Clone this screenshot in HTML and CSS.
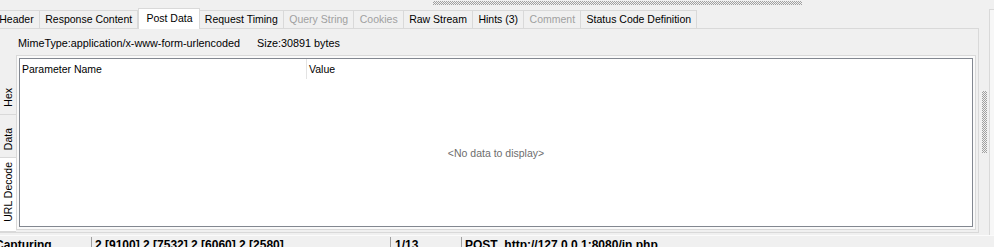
FILE: index.html
```html
<!DOCTYPE html>
<html>
<head>
<meta charset="utf-8">
<link rel="stylesheet" href="styles.css">
</head>
<body>
<div class="app">
  <div class="hsplit"><div class="grip-h"></div></div>
  <div class="main">
    <div class="tabctl">
      <div class="tabstrip">
        <div class="tab">Header</div>
        <div class="tab">Response Content</div>
        <div class="tab active">Post Data</div>
        <div class="tab">Request Timing</div>
        <div class="tab disabled">Query String</div>
        <div class="tab disabled">Cookies</div>
        <div class="tab">Raw Stream</div>
        <div class="tab">Hints (3)</div>
        <div class="tab disabled">Comment</div>
        <div class="tab">Status Code Definition</div>
      </div>
      <div class="page">
        <div class="mimebar">
          <span>MimeType:application/x-www-form-urlencoded</span>
          <span class="size">Size:30891 bytes</span>
        </div>
        <div class="subctl">
          <div class="vtabs">
            <div class="vtab vtab-hex"><span class="vtext">Hex</span></div>
            <div class="vtab vtab-data"><span class="vtext">Data</span></div>
            <div class="vtab vtab-url active"><span class="vtext">URL Decode</span></div>
          </div>
          <div class="frame">
            <div class="grid">
              <div class="ghead">
                <div class="gcol gcol-name">Parameter Name</div>
                <div class="gcol gcol-value">Value</div>
              </div>
              <div class="gbody">&lt;No data to display&gt;</div>
            </div>
          </div>
        </div>
      </div>
    </div>
    <div class="vsplit"><div class="grip-v"></div></div>
    <div class="rightpane"></div>
  </div>
  <div class="statusbar">
    <div class="pane pane-state">Capturing</div>
    <div class="pane pane-procs">2 [9100] 2 [7532] 2 [6060] 2 [2580]</div>
    <div class="pane pane-count">1/13</div>
    <div class="pane pane-url">POST  http://127.0.0.1:8080/in.php</div>
  </div>
</div>
</body>
</html>
```
FILE: styles.css
```css
* { box-sizing: border-box; }

html, body {
  margin: 0;
  padding: 0;
}

body {
  width: 994px;
  height: 247px;
  overflow: hidden;
  background: #f0f0f0;
  color: #000;
  font-family: "Liberation Sans", Arial, sans-serif;
  font-size: 10.5px;
}

.app {
  width: 994px;
  height: 247px;
  overflow: hidden;
}

.hsplit {
  height: 8px;
  padding-top: 1px;
}

.grip-h {
  margin-left: 433px;
  width: 369px;
  height: 4px;
  background: conic-gradient(#a0a0a0 25%, transparent 0 50%, #a0a0a0 0 75%, transparent 0) 0 0 / 2px 2px;
}

.main {
  display: flex;
  height: 227px;
}

.tabctl {
  width: 979px;
  flex: none;
  display: flex;
  flex-direction: column;
}

.tabstrip {
  height: 20px;
  display: flex;
  align-items: flex-end;
  margin-left: -6px;
  position: relative;
  z-index: 1;
}

.tab {
  height: 18px;
  line-height: 17px;
  padding: 0 5.25px;
  border-top: 1px solid #d9d9d9;
  border-right: 1px solid #d9d9d9;
  white-space: nowrap;
}

.tab.disabled {
  color: #a0a0a0;
}

.tab.active {
  height: 21px;
  line-height: 19px;
  margin-bottom: -1px;
  padding: 0 6px 0 7px;
  background: #fff;
  border-left: 1px solid #d9d9d9;
}

.page {
  height: 205px;
  border: 1px solid #d9d9d9;
  border-left: 0;
  background: #f0f0f0;
}

.mimebar {
  height: 26px;
  padding: 2px 0 0 18px;
  display: flex;
  align-items: center;
  white-space: nowrap;
  font-size: 10.8px;
}

.mimebar .size {
  margin-left: 17px;
}

.subctl {
  display: flex;
  height: 177px;
}

.vtabs {
  width: 16px;
  flex: none;
  display: flex;
  flex-direction: column;
  justify-content: flex-end;
}

.vtab {
  display: flex;
  flex-direction: column;
  justify-content: flex-end;
  align-items: center;
  padding-right: 1px;
  border-top: 1px solid #d9d9d9;
}

.vtab-hex {
  height: 28px;
  padding-bottom: 7px;
  border-top: 0;
}

.vtab-data {
  height: 43px;
  padding-bottom: 7px;
}

.vtab-url {
  height: 75px;
  padding-bottom: 9px;
}

.vtab.active {
  background: #fff;
  border-bottom: 1px solid #d9d9d9;
}

.vtext {
  writing-mode: vertical-rl;
  transform: rotate(180deg);
  line-height: 12px;
  white-space: nowrap;
}

.frame {
  width: 960px;
  height: 175px;
  border: 1px solid #d9d9d9;
  padding: 2px;
  background: #fafafa;
}

.grid {
  height: 100%;
  border: 1px solid #828790;
  background: #fff;
  display: flex;
  flex-direction: column;
}

.ghead {
  display: flex;
  height: 20px;
}

.gcol {
  line-height: 20px;
  padding-left: 2px;
  white-space: nowrap;
}

.gcol-name {
  width: 287px;
  border-right: 1px solid #e3e3e3;
}

.gbody {
  flex: 1;
  display: flex;
  align-items: center;
  justify-content: center;
  color: #6d6d6d;
}

.vsplit {
  width: 10px;
  flex: none;
}

.grip-v {
  margin: 83px 0 0 3px;
  width: 5px;
  height: 62px;
  background: conic-gradient(#a0a0a0 25%, transparent 0 50%, #a0a0a0 0 75%, transparent 0) 0 0 / 2px 2px;
}

.rightpane {
  flex: 1;
  margin-top: 1px;
  height: 226px;
  border-left: 1px solid #d9d9d9;
  border-top: 1px solid #d9d9d9;
  background: #f7f7f7;
}

.statusbar {
  height: 12px;
  display: flex;
  background: #f0f0f0;
  box-shadow: inset 0 1px #fbfbfb;
  overflow: hidden;
}

.pane {
  margin-top: 2px;
  height: 20px;
  padding-top: 1px;
  border-right: 1px solid #a0a0a0;
  font-size: 12px;
  font-weight: bold;
  line-height: 14px;
  white-space: pre;
  overflow: hidden;
  flex: none;
}

.pane-state {
  width: 92px;
  text-indent: -5px;
}

.pane-procs {
  width: 299px;
  padding-left: 3px;
}

.pane-count {
  width: 71px;
  padding-left: 4px;
}

.pane-url {
  flex: 1;
  padding-left: 3px;
  border-right: 0;
}
```
